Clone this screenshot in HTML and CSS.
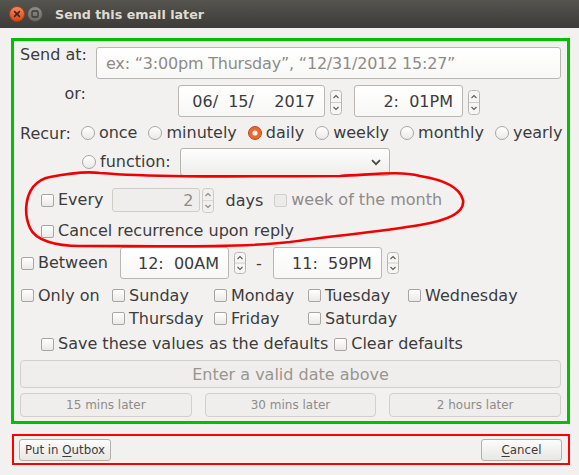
FILE: index.html
```html
<!DOCTYPE html>
<html>
<head>
<meta charset="utf-8">
<link rel="stylesheet" href="styles.css">
</head>
<body>
<header class="titlebar">
  <span class="tb-btn">
    <svg width="16" height="16" viewBox="0 0 16 16">
      <defs><linearGradient id="gc" x1="0" y1="0" x2="0" y2="1"><stop offset="0" stop-color="#f58a5c"/><stop offset="1" stop-color="#d94514"/></linearGradient></defs>
      <circle cx="8" cy="8" r="7.5" fill="url(#gc)" stroke="#a93d18"/>
      <path d="M5.6 5.6l4.8 4.8M10.4 5.6l-4.8 4.8" stroke="#3a2620" stroke-width="1.5" stroke-linecap="round"/>
    </svg>
  </span>
  <span class="tb-btn">
    <svg width="16" height="16" viewBox="0 0 16 16">
      <defs><linearGradient id="gm" x1="0" y1="0" x2="0" y2="1"><stop offset="0" stop-color="#8e8d88"/><stop offset="1" stop-color="#6a6965"/></linearGradient></defs>
      <circle cx="8" cy="8" r="7.5" fill="url(#gm)" stroke="#4e4d49"/>
      <rect x="5" y="5" width="6" height="6" rx="1.2" fill="none" stroke="#3a3935" stroke-width="1.3"/>
    </svg>
  </span>
  <span class="title">Send this email later</span>
</header>

<main class="panel">
  <div class="row send-row">
    <span class="lbl">Send at:</span>
    <div class="textbox">ex: “3:00pm Thursday”, “12/31/2012 15:27”</div>
  </div>

  <div class="row or-row">
    <span class="lbl">or:</span>
    <div class="spinbox date">06/  15/    2017</div>
    <svg class="spin spin-or" width="12" height="25" viewBox="0 0 12 25"><rect x="0.5" y="0.5" width="11" height="24" rx="3" fill="#f7f6f5" stroke="#b9b6b1"/><path d="M1 12.5H11" stroke="#cfccc8"/><path d="M3.5 8L6 5.5L8.5 8" fill="none" stroke="#5c5b57" stroke-width="1.1"/><path d="M3.5 17L6 19.5L8.5 17" fill="none" stroke="#5c5b57" stroke-width="1.1"/></svg>
    <div class="spinbox time">2:  01PM</div>
    <svg class="spin spin-or" width="12" height="25" viewBox="0 0 12 25"><rect x="0.5" y="0.5" width="11" height="24" rx="3" fill="#f7f6f5" stroke="#b9b6b1"/><path d="M1 12.5H11" stroke="#cfccc8"/><path d="M3.5 8L6 5.5L8.5 8" fill="none" stroke="#5c5b57" stroke-width="1.1"/><path d="M3.5 17L6 19.5L8.5 17" fill="none" stroke="#5c5b57" stroke-width="1.1"/></svg>
  </div>

  <div class="row recur-row">
    <span>Recur:</span>
    <div class="opts">
      <label class="opt"><span class="rb"></span>once</label>
      <label class="opt"><span class="rb"></span>minutely</label>
      <label class="opt"><svg class="rb-on" width="14" height="14" viewBox="0 0 14 14"><circle cx="7" cy="7" r="6.5" fill="#e66a32" stroke="#c24b1a"/><circle cx="7" cy="7" r="2.6" fill="#fff1e8"/></svg>daily</label>
      <label class="opt"><span class="rb"></span>weekly</label>
      <label class="opt"><span class="rb"></span>monthly</label>
      <label class="opt"><span class="rb"></span>yearly</label>
    </div>
  </div>

  <div class="row func-row">
    <label class="opt"><span class="rb"></span>function:</label>
    <div class="combo">
      <svg width="10" height="7" viewBox="0 0 10 7"><path d="M1 1.2L5 5.2L9 1.2" fill="none" stroke="#4a4946" stroke-width="1.8"/></svg>
    </div>
  </div>

  <div class="row every-row">
    <label class="opt"><span class="cb"></span>Every</label>
    <div class="spinbox small disabled">2</div>
    <svg class="spin spin-every" width="12" height="25" viewBox="0 0 12 25"><rect x="0.5" y="0.5" width="11" height="24" rx="3" fill="#f1f0ef" stroke="#cdcac6"/><path d="M1 12.5H11" stroke="#dcd9d5"/><path d="M3.5 8L6 5.5L8.5 8" fill="none" stroke="#8a8884" stroke-width="1.1"/><path d="M3.5 17L6 19.5L8.5 17" fill="none" stroke="#8a8884" stroke-width="1.1"/></svg>
    <span class="days">days</span>
    <label class="opt dim week"><span class="cb disabled"></span>week of the month</label>
  </div>

  <div class="row cancel-row">
    <label class="opt"><span class="cb"></span>Cancel recurrence upon reply</label>
  </div>

  <div class="row between-row">
    <label class="opt first"><span class="cb"></span>Between</label>
    <div class="spinbox time t1">12:  00AM</div>
    <svg class="spin" width="12" height="22" viewBox="0 0 12 22"><rect x="0.5" y="0.5" width="11" height="21" rx="3" fill="#f7f6f5" stroke="#b9b6b1"/><path d="M1 11H11" stroke="#cfccc8"/><path d="M3.5 7L6 4.5L8.5 7" fill="none" stroke="#5c5b57" stroke-width="1.1"/><path d="M3.5 15L6 17.5L8.5 15" fill="none" stroke="#5c5b57" stroke-width="1.1"/></svg>
    <span class="dash">-</span>
    <div class="spinbox time t2">11:  59PM</div>
    <svg class="spin" width="12" height="22" viewBox="0 0 12 22"><rect x="0.5" y="0.5" width="11" height="21" rx="3" fill="#f7f6f5" stroke="#b9b6b1"/><path d="M1 11H11" stroke="#cfccc8"/><path d="M3.5 7L6 4.5L8.5 7" fill="none" stroke="#5c5b57" stroke-width="1.1"/><path d="M3.5 15L6 17.5L8.5 15" fill="none" stroke="#5c5b57" stroke-width="1.1"/></svg>
  </div>

  <div class="days-grid">
    <label class="opt first"><span class="cb"></span>Only on</label>
    <label class="opt"><span class="cb"></span>Sunday</label>
    <label class="opt"><span class="cb"></span>Monday</label>
    <label class="opt"><span class="cb"></span>Tuesday</label>
    <label class="opt"><span class="cb"></span>Wednesday</label>
    <span></span>
    <label class="opt"><span class="cb"></span>Thursday</label>
    <label class="opt"><span class="cb"></span>Friday</label>
    <label class="opt"><span class="cb"></span>Saturday</label>
  </div>

  <div class="row save-row">
    <label class="opt"><span class="cb"></span>Save these values as the defaults</label>
    <label class="opt clear"><span class="cb"></span>Clear defaults</label>
  </div>

  <div class="btn-wide">Enter a valid date above</div>

  <div class="quick">
    <div class="qbtn">15 mins later</div>
    <div class="qbtn">30 mins later</div>
    <div class="qbtn">2 hours later</div>
  </div>
</main>

<footer class="actions">
  <div class="btn put"><span>Put in <u>O</u>utbox</span></div>
  <div class="btn cancel"><span><u>C</u>ancel</span></div>
</footer>

<svg class="annotation" width="579" height="475" viewBox="0 0 579 475">
  <path d="M50 177 C70 173 85 171 100 173 C160 178 260 176 340 176 C380 174 400 171 420 176 C445 180 460 188 463 200 C465 212 450 220 420 225 C380 232 330 236 290 242 C240 248 150 246 80 246 C55 246 35 240 30 228 C24 215 25 198 33 187 C38 181 44 178 50 177 Z" fill="none" stroke="#f00000" stroke-width="2.6" stroke-linejoin="round"/>
</svg>
</body>
</html>
```

FILE: styles.css
```css
* { box-sizing: border-box; }
html, body { margin: 0; padding: 0; }
body {
  width: 579px;
  height: 475px;
  overflow: hidden;
  position: relative;
  background: #f2f1f0;
  font-family: "DejaVu Sans", sans-serif;
  font-size: 16px;
  color: #3c3c3c;
}

.titlebar {
  height: 28px;
  display: flex;
  align-items: center;
  padding-left: 9px;
  background: linear-gradient(#55544f, #3c3b37);
}
.tb-btn { width: 16px; height: 16px; margin-right: 2px; display: flex; }
.title {
  margin-left: 10px;
  font-weight: bold;
  font-size: 12.7px;
  color: #dfdbd2;
}

.panel {
  margin: 10px 9px 0 11px;
  border: 3px solid #00c000;
  padding: 3px 6px 4px 6px;
}

.row { display: flex; align-items: center; white-space: nowrap; }
.lbl { width: 66px; text-align: right; line-height: 22px; flex-shrink: 0; }

.send-row { align-items: flex-start; }
.textbox {
  flex: 1;
  margin: 3px 0 0 10px;
  height: 32px;
  border: 1px solid #bab7b2;
  border-radius: 3px;
  background: linear-gradient(#ffffff, #f8f8f7);
  padding-left: 9px;
  display: flex;
  align-items: center;
  color: #8f8b87;
  letter-spacing: -0.2px;
}

.or-row { margin-top: 4px; align-items: flex-start; }
.spinbox {
  height: 32px;
  border: 1px solid #bab7b2;
  border-radius: 3px;
  background: linear-gradient(#ffffff, #f7f7f6);
  padding-right: 9px;
  display: flex;
  align-items: center;
  justify-content: flex-end;
  white-space: pre;
  flex-shrink: 0;
}
.date { margin: 2px 0 0 92px; width: 147px; }
.or-row .time { margin: 2px 0 0 12px; width: 109px; }
.spin { flex-shrink: 0; display: block; }
.spin-or { margin: 7px 0 0 5px; }

.recur-row { margin-top: 5px; height: 22px; }
.opts { display: flex; gap: 11px; margin-left: 10px; }
.opt { display: flex; align-items: center; gap: 4px; line-height: 22px; }
.rb {
  width: 14px; height: 14px;
  border-radius: 50%;
  border: 1px solid #a9a6a2;
  background: linear-gradient(#ffffff, #ebe9e7);
  flex-shrink: 0;
}
.rb-on { display: block; flex-shrink: 0; }
.cb {
  width: 13px; height: 13px;
  border-radius: 2px;
  border: 1px solid #a9a6a2;
  background: linear-gradient(#ffffff, #ebe9e7);
  flex-shrink: 0;
}
.cb.disabled { border-color: #d2cfcb; background: #ecebea; }
.dim { color: #8f8b87; }

.func-row { margin-top: 4px; height: 28px; padding-left: 62px; }
.combo {
  margin-left: 9px;
  width: 210px;
  height: 28px;
  border: 1px solid #b7b4af;
  border-radius: 3px;
  background: linear-gradient(#fefefe, #eeedec);
  display: flex;
  align-items: center;
  justify-content: flex-end;
  padding-right: 8px;
}

.every-row { margin-top: 12px; height: 24px; padding-left: 21px; }
.spinbox.small { margin-left: 9px; width: 88px; height: 24px; padding-right: 6px; }
.spinbox.disabled {
  background: #efeeed;
  border-color: #d0cdc9;
  color: #8f8b87;
}
.spin-every { margin-left: 2px; }
.days { margin-left: 11px; }
.week { margin-left: 11px; }

.cancel-row { margin-top: 8px; height: 22px; padding-left: 21px; }

.between-row { margin-top: 5px; height: 32px; }
.first { margin-left: 1px; }
.between-row .time { width: 109px; }
.t1 { margin-left: 12px; }
.between-row .spin { margin-left: 5px; }
.dash { margin-left: 10px; }
.t2 { margin-left: 11px; }

.days-grid {
  margin-top: 5px;
  display: grid;
  grid-template-columns: 92px 102px 94px 100px auto;
  grid-auto-rows: 23px;
  align-items: center;
  white-space: nowrap;
}

.save-row { margin-top: 3px; height: 22px; padding-left: 21px; }
.clear { margin-left: 6px; }

.btn-wide {
  margin-top: 5px;
  height: 28px;
  border: 1px solid #d3d0cc;
  border-radius: 4px;
  background: #efeeed;
  color: #99958f;
  display: flex;
  align-items: center;
  justify-content: center;
}

.quick {
  margin-top: 5px;
  display: grid;
  grid-template-columns: 1fr 1fr 1fr;
  gap: 13px;
  height: 24px;
}
.qbtn {
  border: 1px solid #d3d0cc;
  border-radius: 4px;
  background: #efeeed;
  color: #8f8b87;
  font-size: 12px;
  display: flex;
  align-items: center;
  justify-content: center;
}

.actions {
  margin: 10px 9px 0 12px;
  height: 31px;
  border: 2px solid #ff0000;
  display: flex;
  align-items: center;
  justify-content: space-between;
  padding: 0 6px 0 5px;
}
.btn {
  height: 22px;
  border: 1px solid #b3b0ab;
  border-radius: 3px;
  background: linear-gradient(#fcfcfc, #e8e7e5);
  font-size: 11.8px;
  color: #3c3c3c;
  display: flex;
  align-items: center;
  justify-content: center;
  white-space: pre;
}
.btn u { text-underline-offset: 2px; }
.put { width: 92px; }
.cancel { width: 81px; }

.annotation {
  position: absolute;
  left: 0;
  top: 0;
  pointer-events: none;
}
```
